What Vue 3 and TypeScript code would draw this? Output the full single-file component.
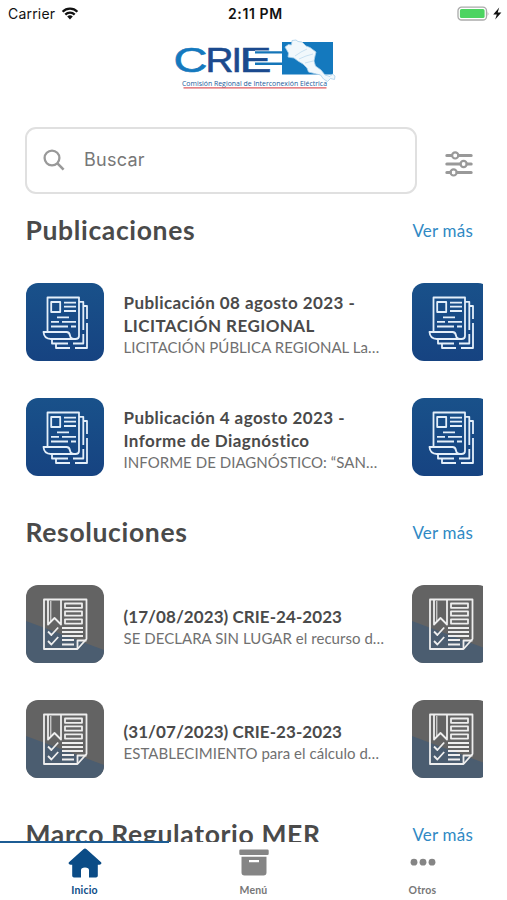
<script setup lang="ts">
interface Entry {
  title: string[]
  text: string
}
interface Section {
  name: string
  kind: 'news' | 'resolution'
  entries: Entry[]
}

const sections: Section[] = [
  {
    name: 'Publicaciones',
    kind: 'news',
    entries: [
      { title: ['Publicación 08 agosto 2023 -', 'LICITACIÓN REGIONAL'], text: 'LICITACIÓN PÚBLICA REGIONAL La…' },
      { title: ['Publicación 4 agosto 2023 -', 'Informe de Diagnóstico'], text: 'INFORME DE DIAGNÓSTICO: “SAN…' },
    ],
  },
  {
    name: 'Resoluciones',
    kind: 'resolution',
    entries: [
      { title: ['(17/08/2023) CRIE-24-2023'], text: 'SE DECLARA SIN LUGAR el recurso d…' },
      { title: ['(31/07/2023) CRIE-23-2023'], text: 'ESTABLECIMIENTO para el cálculo d…' },
    ],
  },
  { name: 'Marco Regulatorio MER', kind: 'resolution', entries: [] },
]
</script>

<template>
  <div class="screen">
    <header class="status">
      <div class="carrier">
        <span>Carrier</span>
        <svg class="wifi" viewBox="0 0 18 13">
          <path d="M1.600 4.700a10.600 10.600 0 0 1 14.800 0M4.300 7.600a6.800 6.800 0 0 1 9.400 0" fill="none" stroke="#111" stroke-width="2.300" />
          <path d="M9 12.400 6.200 9.600a4 4 0 0 1 5.600 0Z" fill="#111" />
        </svg>
      </div>
      <div class="clock">2:11 PM</div>
      <svg class="battery" viewBox="0 0 46 16">
        <rect x="1" y="1.200" width="28.500" height="12.800" rx="3.600" fill="#fff" stroke="#aaa" stroke-width="1.300" />
        <rect x="2.900" y="3.100" width="24.700" height="9" rx="1.600" fill="#4cd461" />
        <path d="M30.600 5.400q1.800 2.300 0 4.600Z" fill="#aaa" />
        <path d="M42.200 1.400 36.200 8.400h3.600l-1.600 5.200L44.400 6.400h-3.700Z" fill="#111" />
      </svg>
    </header>

    <div class="brand">
      <svg class="logo" viewBox="0 0 170 52">
        <g class="logo-name">
          <text x="2.500" y="32.500" textLength="34" lengthAdjust="spacingAndGlyphs" fill="#1479be" stroke="#1479be">C</text>
          <g fill="#1b4a8e" stroke="#1b4a8e">
            <text x="34.500" y="32.500" textLength="28" lengthAdjust="spacingAndGlyphs">R</text>
            <text x="60.500" y="32.500" textLength="10.500" lengthAdjust="spacingAndGlyphs">I</text>
            <text x="68.500" y="32.500" textLength="32" lengthAdjust="spacingAndGlyphs">E</text>
          </g>
        </g>
        <path d="M84 13.400h28M84 24.800h28" stroke="#fff" stroke-width="4" />
        <path d="M84 13.400h28M84 24.800h28" stroke="#1475b8" stroke-width="2.400" />
        <rect x="111" y="3" width="51" height="32.500" fill="#1479be" />
        <path
          d="m114 8 3.500-2.500 3 .5.500-4.500 4-.5 2 1.500 4 .5 4 4 4 1.500 6 4.500-1 4-1 5 1.500 5 5.500 4 4 5 5 1.500 2.500-2.500 2.500 2-.5 3.500-4-1-3 3-4-2.500-3-4-6-1.500-6-1.500-1.500-4-4-4-5-3-4-3-6-1 .5-4Z"
          fill="#f1f8fc"
          stroke="#a8cfea"
          stroke-width=".8"
          stroke-linejoin="round"
        />
        <path d="m124 17 6-4 6-3m-8 10 7-3 7-2m-8 9 8-2" fill="none" stroke="#b7d7ec" stroke-width=".7" />
        <text class="logo-caption" x="11" y="46.800" textLength="145" lengthAdjust="spacingAndGlyphs">Comisión Regional de Interconexión Eléctrica</text>
        <path d="M12.500 48.800h143" stroke="#e05a5f" stroke-width="1.300" />
      </svg>
    </div>

    <div class="search-row">
      <div class="search">
        <svg class="lens" viewBox="0 0 22 22">
          <circle cx="9" cy="9" r="7.400" fill="none" stroke="#999" stroke-width="2.300" />
          <path d="m14.200 14.200 6.400 6.400" stroke="#999" stroke-width="2.600" />
        </svg>
        <span>Buscar</span>
      </div>
      <svg class="filter" viewBox="0 0 28 28">
        <g fill="none" stroke="#999" stroke-linecap="round" stroke-width="3">
          <path d="M1.800 5.400h4.800M13.600 5.400h12.600M1.800 14h13.600M22 14h4.200M1.800 22.400h3.600M12 22.400h14.200" />
          <circle cx="10.200" cy="5.400" r="3.100" stroke-width="2.200" />
          <circle cx="18.600" cy="14" r="3.100" stroke-width="2.200" />
          <circle cx="8.600" cy="22.400" r="3.100" stroke-width="2.200" />
        </g>
      </svg>
    </div>

    <main>
      <section v-for="section in sections" :key="section.name" :class="section.kind">
        <div class="heading">
          <h2>{{ section.name }}</h2>
          <a>Ver más</a>
        </div>
        <div v-if="section.entries.length" class="entries">
          <div v-for="entry in section.entries" :key="entry.text" class="entry">
            <template v-for="copy in 2" :key="copy">
              <div class="tile">
                <svg v-if="section.kind === 'news'" viewBox="0 0 78 78">
                  <g fill="none" stroke="#e4effa" stroke-width="1.800" stroke-linejoin="round">
                    <path d="M21.500 48.500V14.500H53v38.500q0 3-3.500 3H25q-7 0-7.500-7h23q3 0 3.500 3.500t4 3.500" />
                    <path d="M53 18.800h4.300V47m0 4v9.500H47m-5 0H26v-4M57.300 23H61v13m0 4v25H49m-5 0H30v-4" />
                    <rect x="25.200" y="19" width="9" height="10" />
                    <path d="M38 19.700h12M38 23.600h12M38 28h12M31 34.300h12M25 38.900h8m3 0h14M25 43.500h17m3 0h5" />
                  </g>
                </svg>
                <svg v-else viewBox="0 0 78 78">
                  <path d="M0 36 78 65v13H0Z" fill="#4b5d70" />
                  <g fill="none" stroke="#eee" stroke-width="1.800" stroke-linejoin="round">
                    <path d="M18 14.500h42.500V54l-9 10H18Z" />
                    <path d="M51.500 64V55.500h9M22 14.500v25l6.500-6.500 6.500 6.500v-25" />
                    <path d="M24.800 16v20" stroke-width="1" />
                    <rect x="39" y="18.500" width="17" height="4.300" />
                    <rect x="39" y="26.400" width="17" height="4.300" />
                    <rect x="39" y="34.300" width="17" height="4.300" />
                    <path d="M36 43h21M36 47h21M36 51h21M36 55h12M36 59.500h12M22 46.500l3.400 3.500 6.800-7.500M22 56l3.400 3.500 6.800-7.500" />
                  </g>
                </svg>
              </div>
              <div v-if="copy === 1" class="copy">
                <h3><span v-for="line in entry.title" :key="line">{{ line }}</span></h3>
                <p>{{ entry.text }}</p>
              </div>
            </template>
          </div>
        </div>
      </section>
    </main>

    <nav>
      <div class="tab active">
        <svg viewBox="0 0 34 30">
          <path d="M15.400 1.200q1.600-1.400 3.200 0L32.800 14q1 1 .4 1.800-.6.9-2 .9h-1.400v11q0 1.800-1.800 1.800h-7v-7.300q0-2.700-4-2.700t-4 2.700v7.300H6q-1.800 0-1.800-1.800v-11H2.800q-1.400 0-2-.9-.6-.8.4-1.800Z" fill="#0b4c86" />
        </svg>
        <span>Inicio</span>
      </div>
      <div class="tab">
        <svg viewBox="0 0 34 30">
          <path d="M3.500 1.500h27q1.200 0 1.200 1.200v3q0 1.200-1.200 1.200h-27q-1.200 0-1.200-1.200v-3q0-1.200 1.200-1.200Z" fill="#858585" />
          <path fill-rule="evenodd" d="M4.500 8.700h25v15.800q0 3-3 3h-19q-3 0-3-3ZM12 12v2.200h10V12Z" fill="#858585" />
        </svg>
        <span>Menú</span>
      </div>
      <div class="tab">
        <svg viewBox="0 0 34 30">
          <g fill="#858585">
            <circle cx="8" cy="14.200" r="3.400" />
            <circle cx="17" cy="14.200" r="3.400" />
            <circle cx="26" cy="14.200" r="3.400" />
          </g>
        </svg>
        <span>Otros</span>
      </div>
    </nav>
  </div>
</template>

<style>
body {
  margin: 0;
  background: #fff;
}
</style>

<style scoped>
.screen {
  display: flex;
  flex-direction: column;
  width: 507px;
  height: 900px;
  overflow: hidden;
  background: #fff;
  color: #4a4a4a;
  font-family: Lato, sans-serif;
}
svg {
  display: block;
  flex: none;
}
.status {
  display: flex;
  align-items: center;
  justify-content: space-between;
  flex: none;
  height: 27px;
  padding: 0 4px 0 8px;
  color: #111;
  font-family: Inter, sans-serif;
  font-size: 14px;
}
.carrier,
.battery {
  flex: none;
}
.carrier {
  display: flex;
  align-items: center;
  gap: 6px;
  width: 72px;
  letter-spacing: 0.2px;
}
.wifi {
  width: 18px;
  height: 13px;
}
.clock {
  flex: 1;
  padding-left: 148px;
  font-weight: 600;
  letter-spacing: 0.6px;
}
.battery {
  width: 46px;
  height: 16px;
}
.brand {
  flex: none;
  height: 100px;
  padding: 12px 0 0 171px;
  box-sizing: border-box;
}
.logo {
  width: 170px;
  height: 52px;
}
.logo-name {
  font: 400 35px 'Liberation Sans', sans-serif;
  stroke-width: 0.6px;
}
.logo-caption {
  font: 500 7px 'Open Sans', sans-serif;
  fill: #225b9b;
}
.search-row {
  display: flex;
  align-items: center;
  flex: none;
  gap: 28px;
  height: 67px;
  padding-left: 25px;
}
.search {
  display: flex;
  align-items: center;
  gap: 19px;
  box-sizing: border-box;
  width: 392px;
  height: 67px;
  padding: 0 0 2px 16px;
  border: 2px solid #e0e0e0;
  border-radius: 11px;
  color: #777;
  font: 18px Inter, sans-serif;
  letter-spacing: 0.25px;
}
.lens {
  width: 22px;
  height: 22px;
}
.filter {
  width: 28px;
  height: 28px;
  margin-top: 7px;
}
main {
  flex: none;
  height: 648px;
  padding: 13px 24px 0 25.5px;
  box-sizing: border-box;
  overflow: hidden;
}
section {
  height: 302px;
}
.heading {
  display: flex;
  align-items: center;
  justify-content: space-between;
  height: 46px;
  padding-right: 10px;
}
h2 {
  margin: 0;
  font-size: 26.5px;
  font-weight: 700;
  letter-spacing: 0.65px;
  line-height: 46px;
}
a {
  padding-top: 1px;
  color: #3089c4;
  font-size: 17px;
  letter-spacing: 0.2px;
}
.entries {
  display: flex;
  flex-direction: column;
  gap: 37px;
  padding-top: 29.5px;
  overflow: hidden;
}
.entry {
  display: flex;
  height: 78px;
}
.tile {
  flex: none;
  width: 78px;
  height: 78px;
  border-radius: 12px;
  overflow: hidden;
}
.news .tile {
  background: linear-gradient(#19518a, #164381);
}
.resolution .tile {
  background: #636363;
}
.copy {
  flex: none;
  box-sizing: border-box;
  width: 308px;
  padding: 8.5px 0 0 20px;
  white-space: nowrap;
}
.resolution .copy {
  padding-top: 20.5px;
}
h3 {
  margin: 0;
  font-size: 17px;
  font-weight: 700;
  letter-spacing: 0.43px;
  line-height: 23px;
}
.resolution h3 {
  letter-spacing: 0.06px;
}
h3 span {
  display: block;
}
p {
  margin: 0;
  color: #707070;
  font-size: 15px;
  letter-spacing: 0.04px;
  line-height: 21px;
}
nav {
  display: grid;
  grid-template-columns: repeat(3, 169px);
  position: relative;
  z-index: 1;
  flex: none;
  height: 59px;
  margin-top: -1px;
}
.tab {
  display: flex;
  flex-direction: column;
  align-items: center;
  padding-top: 5px;
  border-top: 2px solid transparent;
  color: #777;
  font-size: 10.5px;
  font-weight: 700;
  letter-spacing: 0.2px;
}
.tab svg {
  width: 34px;
  height: 30px;
}
.tab span {
  margin-top: 5px;
  line-height: 14px;
}
.active {
  border-color: #1c5c94;
  color: #0b4c86;
}
</style>
